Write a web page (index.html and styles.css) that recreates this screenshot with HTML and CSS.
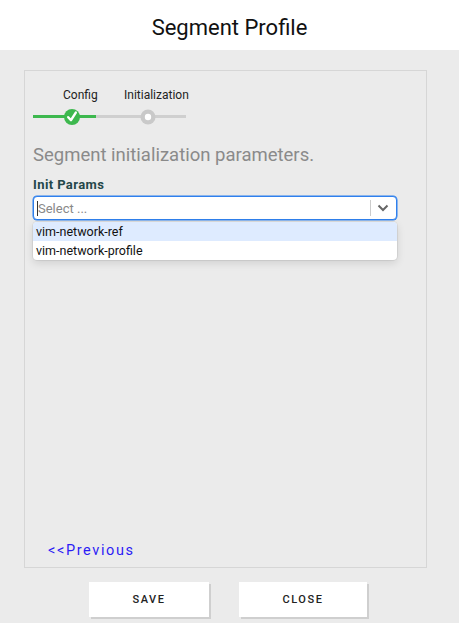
FILE: index.html
```html
<!DOCTYPE html>
<html>
<head>
<meta charset="utf-8">
<link rel="stylesheet" href="styles.css">
</head>
<body>
<div class="header"><h1 class="title">Segment Profile</h1></div>
<div class="main">
  <div class="panel">
    <div class="stepper">
      <div class="labels">
        <span class="lab lab-config">Config</span>
        <span class="lab lab-init">Initialization</span>
      </div>
      <div class="track">
        <div class="line green"></div>
        <div class="line gray"></div>
        <svg class="dot dot-check" width="16" height="16" viewBox="0 0 16 16">
          <circle cx="8" cy="8" r="8" fill="#3db84e"/>
          <path d="M4.2 8.2 L7 11.2 L11.8 3.6" fill="none" stroke="#fff" stroke-width="2.4" stroke-linecap="round" stroke-linejoin="round"/>
        </svg>
        <svg class="dot dot-pending" width="16" height="16" viewBox="0 0 16 16">
          <circle cx="8" cy="8" r="7.5" fill="#c9c9c9"/>
          <circle cx="8" cy="8" r="3.2" fill="#fff"/>
        </svg>
      </div>
    </div>
    <p class="desc">Segment initialization parameters.</p>
    <label class="field-label">Init Params</label>
    <div class="select">
      <span class="caret"></span><span class="placeholder">Select ...</span>
      <span class="sep"></span>
      <svg class="chev" width="12" height="8" viewBox="0 0 12 8"><path d="M1.5 1.5 L6 6 L10.5 1.5" fill="none" stroke="#666" stroke-width="2"/></svg>
    </div>
    <div class="menu">
      <div class="opt active">vim-network-ref</div>
      <div class="opt">vim-network-profile</div>
    </div>
    <div class="spacer"></div>
    <a class="prev">&lt;&lt;Previous</a>
  </div>
  <div class="actions">
    <button class="btn btn-save">SAVE</button>
    <button class="btn btn-close">CLOSE</button>
  </div>
</div>
</body>
</html>
```
FILE: styles.css
```css
html, body { margin: 0; padding: 0; }
body { width: 459px; height: 623px; overflow: hidden; font-family: Roboto, "Liberation Sans", sans-serif; background: #ebebeb; }
.header { height: 50px; box-sizing: border-box; padding-top: 5px; background: #fff; display: flex; align-items: center; justify-content: center; }
.title { margin: 0; font-size: 22px; font-weight: 400; color: #111; }
.main { height: 573px; box-sizing: border-box; padding: 20px 0 0 24px; }
.panel { width: 403px; height: 498px; box-sizing: border-box; border: 1px solid #d6d6d6; display: flex; flex-direction: column; padding: 0 0 0 8px; }
.stepper { position: relative; width: 160px; height: 52px; margin-top: 17px; }
.labels { position: relative; height: 16px; font-size: 12px; color: #222; }
.lab { position: absolute; top: 0; }
.lab-config { left: 30px; }
.lab-init { left: 91px; }
.track { position: relative; height: 16px; margin-top: 5px; }
.line { position: absolute; top: 6px; height: 3px; }
.green { left: 0; width: 63px; background: #3db84e; }
.gray { left: 63px; width: 90px; background: #cfcfcf; }
.dot { position: absolute; top: 0; }
.dot-check { left: 31px; }
.dot-pending { left: 107px; }
.desc { margin: 4px 0 0 0; font-size: 18.5px; color: #8a8a8a; line-height: 22px; }
.field-label { margin-top: 11px; font-size: 13px; font-weight: 700; color: #24474a; line-height: 15px; letter-spacing: 0.4px; }
.select { margin-top: 4px; width: 364px; height: 24px; box-sizing: border-box; border: 1px solid #2f80ed; border-radius: 4px; background: #fff; display: flex; align-items: center; box-shadow: 0 0 0 0.5px #2f80ed; }
.caret { width: 1px; height: 15px; background: #333; margin-left: 3px; }
.placeholder { font-size: 13px; color: #888; flex: 1; }
.sep { width: 1px; height: 16px; background: #ccc; }
.chev { margin: 0 7px 0 6px; }
.menu { margin-top: 2px; width: 364px; background: #fff; border-radius: 4px; box-shadow: 0 0 0 1px rgba(0,0,0,0.06), 0 3px 8px rgba(0,0,0,0.12); overflow: hidden; }
.opt { height: 19px; line-height: 19px; font-size: 12.5px; color: #111; padding-left: 3px; }
.opt.active { background: #deebff; }
.spacer { flex: 1; }
.prev { margin: 0 0 8px 15px; font-size: 14.5px; color: #2b1cf5; letter-spacing: 1.6px; line-height: 17px; }
.actions { display: flex; gap: 30px; padding: 14px 0 0 65px; }
.btn { height: 35px; border: none; background: #fff; font-family: Roboto, "Liberation Sans", sans-serif; font-size: 11px; font-weight: 500; letter-spacing: 1.6px; color: #222; box-shadow: 2px 2px 0 #cfcfcf; padding: 0; }
.btn-save { width: 120px; }
.btn-close { width: 128px; }
```
